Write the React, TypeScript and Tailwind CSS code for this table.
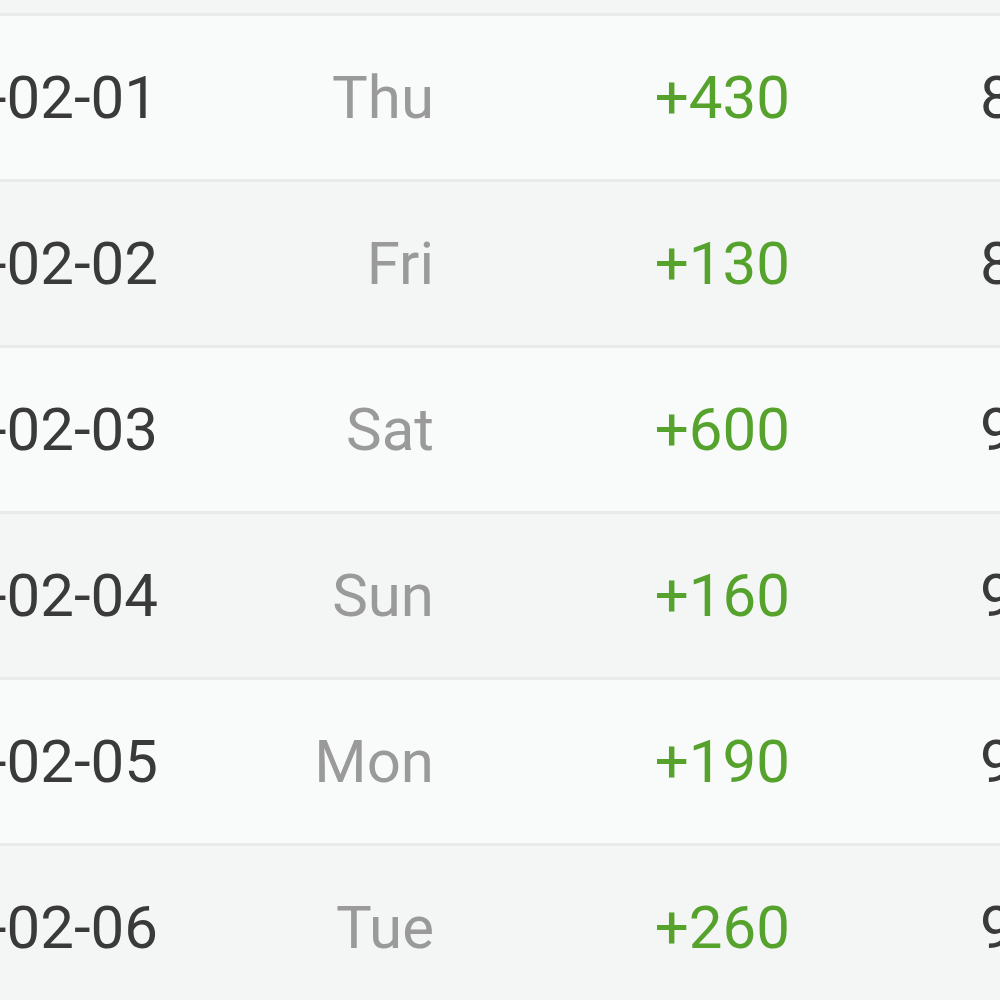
import React from "react";

const rows = [
  { date: "2024-02-01", day: "Thu", delta: "+430", total: "8,120" },
  { date: "2024-02-02", day: "Fri", delta: "+130", total: "8,250" },
  { date: "2024-02-03", day: "Sat", delta: "+600", total: "9,850" },
  { date: "2024-02-04", day: "Sun", delta: "+160", total: "9,010" },
  { date: "2024-02-05", day: "Mon", delta: "+190", total: "9,200" },
  { date: "2024-02-06", day: "Tue", delta: "+260", total: "9,460" },
];

export default function App() {
  return (
    <div
      className="w-[1000px] h-[1000px] overflow-hidden bg-[#f4f5f5] text-[60px] leading-none"
      style={{ fontFamily: "Roboto, 'Liberation Sans', sans-serif" }}
    >
      <div className="h-[13px] bg-[#f4f5f5]" />
      {rows.map((r, i) => (
        <div
          key={r.date}
          className={`flex items-center h-[166px] border-t-[3px] border-[#e9eaea] ${
            i % 2 === 0 ? "bg-[#f9fafa]" : "bg-[#f4f5f5]"
          }`}
        >
          <div className="w-[158px] shrink-0 flex justify-end overflow-hidden">
            <span className="whitespace-nowrap text-[#3a3a3a]">{r.date}</span>
          </div>
          <div className="w-[276px] shrink-0 text-right text-[#9a9a9a]">{r.day}</div>
          <div className="w-[356px] shrink-0 text-right text-[#55a22c]">{r.delta}</div>
          <div className="pl-[190px] whitespace-nowrap text-[#3a3a3a]">{r.total}</div>
        </div>
      ))}
    </div>
  );
}
